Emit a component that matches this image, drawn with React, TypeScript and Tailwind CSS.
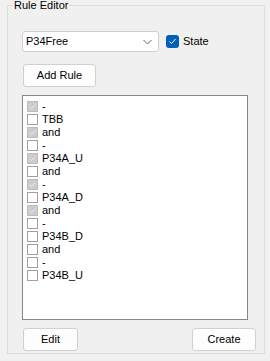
const items = [
  { label: "-", checked: true },
  { label: "TBB", checked: false },
  { label: "and", checked: true },
  { label: "-", checked: false },
  { label: "P34A_U", checked: true },
  { label: "and", checked: false },
  { label: "-", checked: true },
  { label: "P34A_D", checked: false },
  { label: "and", checked: true },
  { label: "-", checked: false },
  { label: "P34B_D", checked: false },
  { label: "and", checked: false },
  { label: "-", checked: false },
  { label: "P34B_U", checked: false },
];

function ListCheck({ checked }: { checked: boolean }) {
  return (
    <span
      className={
        "flex h-[11px] w-[11px] shrink-0 items-center justify-center border " +
        (checked ? "border-[#bcbcbc] bg-[#cccccc]" : "border-[#a0a0a0] bg-white")
      }
    >
      {checked && (
        <svg width="9" height="9" viewBox="0 0 9 9">
          <polyline points="1.5,4.5 3.5,6.5 7.5,2.5" fill="none" stroke="#ececec" strokeWidth="1" />
        </svg>
      )}
    </span>
  );
}

export default function App() {
  return (
    <div className="h-[361px] w-[270px] bg-[#f0f0f0] pl-[7px] text-[11px] text-black [font-family:'Liberation_Sans',Arial,sans-serif]">
      <fieldset className="h-[354px] w-[258px] border border-[#dcdcdc]">
        <legend className="ml-[5px] px-[1px] leading-[11px]">Rule Editor</legend>
        <div className="flex flex-col pl-[14px] pr-[8px]">
          {/* combo + state */}
          <div className="mt-[20px] flex items-center">
            <div className="flex h-[21px] w-[137px] items-center justify-between rounded-[3px] border border-[#cfcfcf] bg-white pl-[3px] pr-[6px]">
              <span>P34Free</span>
              <svg width="9" height="6" viewBox="0 0 9 6">
                <polyline points="0.5,1 4.5,5 8.5,1" fill="none" stroke="#606060" strokeWidth="1" />
              </svg>
            </div>
            <span className="ml-[7px] flex h-[13px] w-[13px] items-center justify-center rounded-[3px] bg-[#005fb8]">
              <svg width="9" height="9" viewBox="0 0 9 9">
                <polyline points="1.5,4.5 3.5,6.5 7.5,2" fill="none" stroke="white" strokeWidth="1" />
              </svg>
            </span>
            <span className="ml-[4px]">State</span>
          </div>

          <button className="ml-[1px] mt-[12px] h-[23px] w-[73px] rounded-[3px] border border-[#d0d0d0] bg-[#fdfdfd]">
            Add Rule
          </button>

          {/* rule list */}
          <div className="mt-[8px] h-[225px] w-[226px] border border-[#828790] bg-white pl-[4px] pt-[4px]">
            {items.map((item, i) => (
              <div key={i} className="flex h-[13px] items-center gap-[4px] leading-[13px]">
                <ListCheck checked={item.checked} />
                <span>{item.label}</span>
              </div>
            ))}
          </div>

          <div className="mt-[8px] flex justify-between">
            <button className="ml-[1px] h-[23px] w-[55px] rounded-[3px] border border-[#d0d0d0] bg-[#fdfdfd]">
              Edit
            </button>
            <button className="h-[23px] w-[64px] rounded-[3px] border border-[#d0d0d0] bg-[#fdfdfd]">
              Create
            </button>
          </div>
        </div>
      </fieldset>
    </div>
  );
}
